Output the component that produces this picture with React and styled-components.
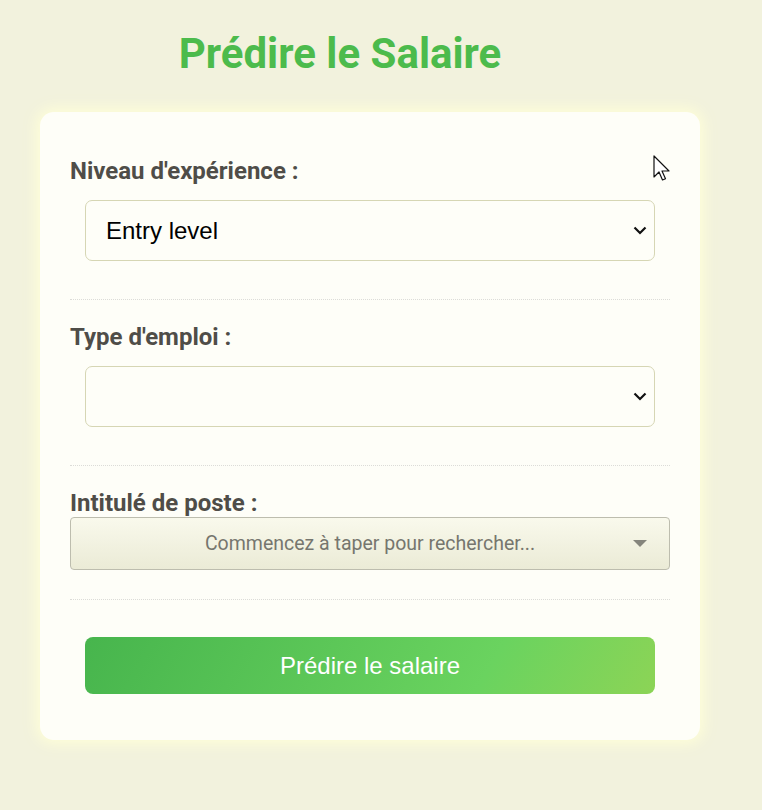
import React from "react";
import styled, { createGlobalStyle } from "styled-components";

const GlobalStyle = createGlobalStyle`
  html, body {
    margin: 0;
    padding: 0;
    background: #f2f2dd;
  }
  body {
    font-family: Roboto, "Liberation Sans", Arial, sans-serif;
  }
`;

const chevron =
  "url(\"data:image/svg+xml,%3Csvg xmlns='http://www.w3.org/2000/svg' width='14' height='9' viewBox='0 0 14 9'%3E%3Cpolyline points='1.5,1.5 7,7 12.5,1.5' fill='none' stroke='%23111' stroke-width='2.2'/%3E%3C/svg%3E\")";

const Page = styled.div`
  position: relative;
  width: 762px;
  min-height: 810px;
  padding-top: 28px;
  box-sizing: border-box;
`;

const Title = styled.h1`
  width: 680px;
  margin: 0 0 32px;
  text-align: center;
  font-family: Roboto, "Liberation Sans", sans-serif;
  font-weight: 700;
  font-size: 42px;
  line-height: 52px;
  color: #4cbb4c;
`;

const Card = styled.div`
  width: 660px;
  margin-left: 40px;
  box-sizing: border-box;
  padding: 46px 30px 46px;
  background: #fefef8;
  border-radius: 14px;
  box-shadow: 0 0 14px 4px rgba(255, 255, 215, 0.9);
`;

const Group = styled.div`
  padding: 24px 0 29px;
  border-bottom: 1px dotted #dcdcd8;
  &:first-child {
    padding-top: 0;
  }
`;

const Label = styled.label`
  display: block;
  margin-bottom: 1px;
  font-family: Roboto, "Liberation Sans", sans-serif;
  font-weight: 700;
  font-size: 24px;
  line-height: 26px;
  color: #4f4d48;
`;

const NativeSelect = styled.select`
  display: block;
  width: 95%;
  height: 61px;
  margin: 16px auto 9px;
  padding: 0 40px 0 20px;
  font-family: "Liberation Sans", Arial, sans-serif;
  font-size: 24px;
  color: #000;
  appearance: none;
  background: #fefef8 ${chevron} no-repeat right 7px center;
  border: 1px solid #d6d6b4;
  border-radius: 7px;
  outline: none;
`;

const Combo = styled.div`
  position: relative;
  display: flex;
  align-items: center;
  justify-content: center;
  height: 53px;
  box-sizing: border-box;
  border: 1px solid #bdbdae;
  border-radius: 4px;
  background: linear-gradient(to bottom, #f9f9ec, #ebebd6);
`;

const Placeholder = styled.span`
  font-family: Roboto, "Liberation Sans", sans-serif;
  font-size: 19.5px;
  color: #76766e;
`;

const Caret = styled.span`
  position: absolute;
  right: 22px;
  top: 22px;
  width: 0;
  height: 0;
  border-left: 7px solid transparent;
  border-right: 7px solid transparent;
  border-top: 7px solid #85857c;
`;

const SubmitButton = styled.button`
  display: block;
  width: 95%;
  height: 57px;
  margin: 37px auto 0;
  border: none;
  border-radius: 8px;
  background: linear-gradient(120deg, #47b54d, #6ad35f 70%, #8cd456);
  color: #fff;
  font-family: "Liberation Sans", Arial, sans-serif;
  font-size: 24px;
`;

const Pointer = styled.svg`
  position: absolute;
  left: 653px;
  top: 155px;
`;

const App = () => {
  return (
    <>
      <GlobalStyle />
      <Page>
        <Title>Prédire le Salaire</Title>
        <Card>
          <Group>
            <Label>Niveau d'expérience :</Label>
            <NativeSelect defaultValue="EN">
              <option value="EN">Entry level</option>
              <option value="MI">Mid level</option>
              <option value="SE">Senior level</option>
            </NativeSelect>
          </Group>
          <Group>
            <Label>Type d'emploi :</Label>
            <NativeSelect defaultValue="">
              <option value=""></option>
              <option value="FT">Full-time</option>
            </NativeSelect>
          </Group>
          <Group>
            <Label>Intitulé de poste :</Label>
            <Combo>
              <Placeholder>Commencez à taper pour rechercher...</Placeholder>
              <Caret />
            </Combo>
          </Group>
          <SubmitButton>Prédire le salaire</SubmitButton>
        </Card>
        <Pointer width="20" height="30" viewBox="0 0 20 30">
          <path
            d="M1 1 L1 22 L6 17 L9.5 25 L12.5 23.7 L9 16 L16 16 Z"
            fill="#fff"
            stroke="#111"
            strokeWidth="1.2"
            strokeLinejoin="round"
          />
        </Pointer>
      </Page>
    </>
  );
};

export default App;
